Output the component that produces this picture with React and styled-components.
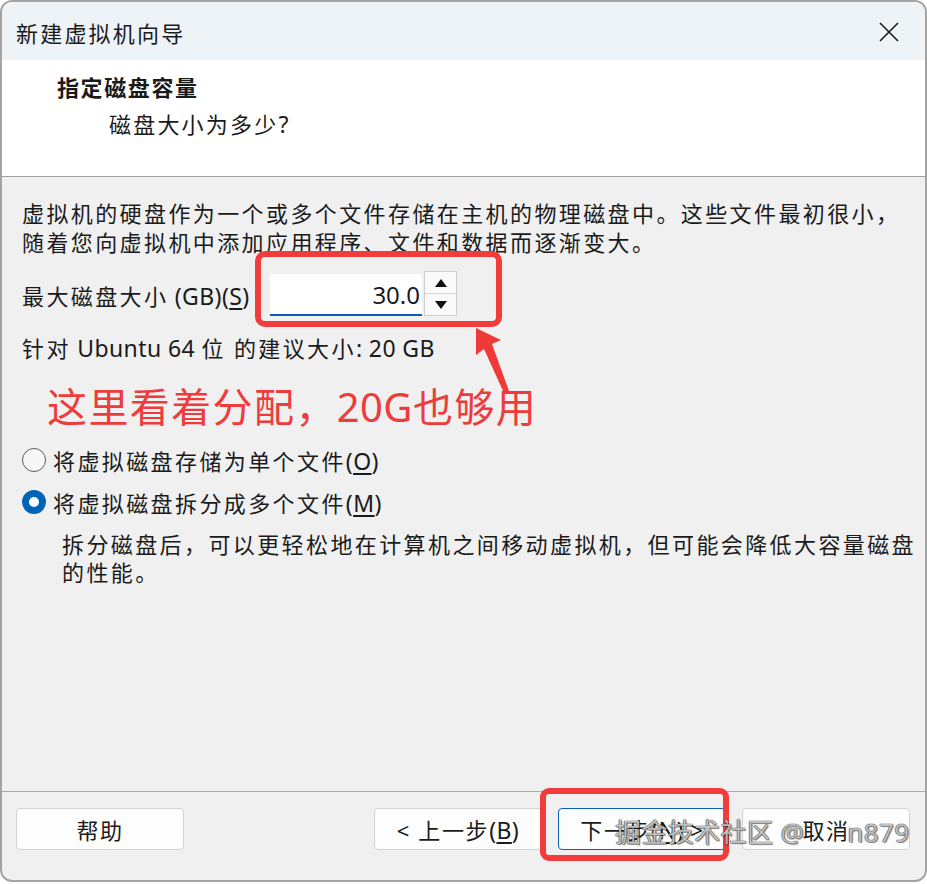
import React from 'react'
import styled, { createGlobalStyle } from 'styled-components'

const Global = createGlobalStyle`
  html, body { margin: 0; padding: 0; background: #ffffff; }
  body {
    font-family: "Noto Sans", "Noto Sans CJK SC", sans-serif;
    color: #1a1a1a;
  }
`

const Window = styled.div`
  width: 923px;
  height: 878px;
  border: 2px solid #a4a4a4;
  border-radius: 12px;
  overflow: hidden;
  display: flex;
  flex-direction: column;
  background: #f0f0f0;
`

const TitleBar = styled.div`
  height: 58px;
  flex: none;
  background: #eef3f8;
  display: flex;
  align-items: center;
  justify-content: space-between;
  padding: 0 16px 0 14px;
`

const Title = styled.div`
  font-size: 22px;
  letter-spacing: 2.2px;
  padding-top: 2px;
`

const CloseBtn = styled.button`
  border: none;
  background: transparent;
  width: 40px;
  height: 40px;
  padding: 0;
  display: flex;
  align-items: center;
  justify-content: center;
  margin-top: 2px;
`

const Header = styled.div`
  height: 117px;
  flex: none;
  background: #ffffff;
  border-bottom: 1px solid #a0a0a0;
  padding: 13px 0 0 55px;
  box-sizing: border-box;
`

const HeadTitle = styled.div`
  font-size: 22px;
  font-weight: 700;
  letter-spacing: 1.6px;
  line-height: 29px;
`

const HeadSub = styled.div`
  font-size: 22px;
  letter-spacing: 2.2px;
  line-height: 29px;
  margin: 8px 0 0 52px;
`

const Body = styled.div`
  position: relative;
  flex: 1;
  padding: 22px 0 0 20px;
  font-size: 22px;
  letter-spacing: 2.4px;
`

const Lat = styled.span`
  font-size: ${p => p.$size || 23}px;
  letter-spacing: 0.4px;
`

const Para = styled.div`
  line-height: 29px;
`

const SizeRow = styled.div`
  display: flex;
  align-items: center;
  margin-top: 17px;
  height: 42px;
`

const Label = styled.span`
  width: 248px;
  flex: none;
  padding-top: 1px;
`

const Under = styled.span`
  text-decoration: underline;
  text-underline-offset: 3px;
`

const NumInput = styled.div`
  width: 152px;
  height: 42px;
  box-sizing: border-box;
  background: #ffffff;
  border-bottom: 2px solid #0a5fb4;
  font-size: 24px;
  letter-spacing: 0;
  display: flex;
  align-items: center;
  justify-content: flex-end;
  padding: 0 2px 0 0;
`

const Spinner = styled.div`
  width: 33px;
  height: 45px;
  margin-top: -3px;
  margin-left: 2px;
  display: flex;
  flex-direction: column;
  border: 1px solid #cfcfcf;
  box-sizing: border-box;
`

const SpinBtn = styled.div`
  flex: 1;
  background: #fafafa;
  display: flex;
  align-items: center;
  justify-content: center;
  & + & { border-top: 1px solid #d4d4d4; }
`

const Hint = styled.div`
  line-height: 29px;
  margin-top: 18px;
`

const Note = styled.div`
  margin: 19px 0 0 25px;
  font-size: 40px;
  line-height: 50px;
  letter-spacing: 1.4px;
  color: #ee3b3b;
`

const RadioRow = styled.label`
  display: flex;
  align-items: center;
  height: 30px;
  margin-top: ${p => p.$gap}px;
  gap: 7px;
`

const Radio = styled.span`
  width: 24px;
  height: 24px;
  box-sizing: border-box;
  border-radius: 50%;
  flex: none;
  display: flex;
  align-items: center;
  justify-content: center;
  border: ${p => (p.$on ? 'none' : '1.5px solid #5a5a5a')};
  background: ${p => (p.$on ? '#0063b8' : '#f7f7f7')};
  &::after {
    content: '';
    width: 10px;
    height: 10px;
    border-radius: 50%;
    background: #ffffff;
    display: ${p => (p.$on ? 'block' : 'none')};
  }
`

const Desc = styled.div`
  margin: 13px 0 0 40px;
  line-height: 28px;
`

const Annot = styled.div`
  position: absolute;
  left: 253px;
  top: 74px;
  width: 247px;
  height: 76px;
  box-sizing: border-box;
  border: 6px solid #f23b3b;
  border-radius: 10px;
`

const Arrow = styled.svg`
  position: absolute;
  left: 460px;
  top: 145px;
`

const Footer = styled.div`
  position: relative;
  height: 72px;
  flex: none;
  border-top: 1px solid #a9a9a9;
  display: flex;
  align-items: flex-start;
  padding: 16px 15px 0 14px;
  gap: 16px;
`

const Btn = styled.button`
  width: 168px;
  height: 42px;
  box-sizing: border-box;
  background: #fdfdfd;
  border: 1px solid ${p => (p.$primary ? '#0a5fb4' : '#d2d2d2')};
  border-radius: 4px;
  font-family: inherit;
  font-size: 22px;
  letter-spacing: 1.6px;
  color: #1a1a1a;
  padding: 0;
`

const Spacer = styled.div`
  flex: 1;
`

const FootMark = styled.div`
  position: absolute;
  left: 538px;
  top: -4px;
  width: 189px;
  height: 73px;
  box-sizing: border-box;
  border: 6px solid #f23b3b;
  border-radius: 9px;
`

const Watermark = styled.div`
  position: absolute;
  left: 613px;
  top: 20px;
  font-size: 26px;
  letter-spacing: 0.4px;
  color: rgba(255, 255, 255, 0.72);
  text-shadow: 0 0 1px #222, 0 0 1px #222, 1px 1px 1px rgba(0,0,0,0.4);
  white-space: pre;
  pointer-events: none;
`

export default function App() {
  return (
    <>
      <Global />
      <Window>
        <TitleBar>
          <Title>新建虚拟机向导</Title>
          <CloseBtn>
            <svg width="22" height="22" viewBox="0 0 22 22">
              <path d="M2 2 L20 20 M20 2 L2 20" stroke="#1a1a1a" strokeWidth="1.6" fill="none" />
            </svg>
          </CloseBtn>
        </TitleBar>
        <Header>
          <HeadTitle>指定磁盘容量</HeadTitle>
          <HeadSub>磁盘大小为多少<Lat>?</Lat></HeadSub>
        </Header>
        <Body>
          <Para>
            虚拟机的硬盘作为一个或多个文件存储在主机的物理磁盘中。这些文件最初很小，
            <br />
            随着您向虚拟机中添加应用程序、文件和数据而逐渐变大。
          </Para>
          <SizeRow>
            <Label>最大磁盘大小<Lat> (GB)(<Under>S</Under>)</Lat></Label>
            <NumInput>30.0</NumInput>
            <Spinner>
              <SpinBtn>
                <svg width="12" height="8" viewBox="0 0 12 8"><path d="M6 0 L12 8 L0 8 Z" fill="#111" /></svg>
              </SpinBtn>
              <SpinBtn>
                <svg width="12" height="8" viewBox="0 0 12 8"><path d="M0 0 L12 0 L6 8 Z" fill="#111" /></svg>
              </SpinBtn>
            </Spinner>
          </SizeRow>
          <Hint>针对<Lat> Ubuntu 64 </Lat>位 的建议大小<Lat>: 20 GB</Lat></Hint>
          <Note>这里看着分配，<Lat $size={40}>20G</Lat>也够用</Note>
          <RadioRow $gap={13}>
            <Radio />
            <span>将虚拟磁盘存储为单个文件<Lat>(<Under>O</Under>)</Lat></span>
          </RadioRow>
          <RadioRow $gap={12}>
            <Radio $on />
            <span>将虚拟磁盘拆分成多个文件<Lat>(<Under>M</Under>)</Lat></span>
          </RadioRow>
          <Desc>
            拆分磁盘后，可以更轻松地在计算机之间移动虚拟机，但可能会降低大容量磁盘
            <br />
            的性能。
          </Desc>
          <Annot />
          <Arrow width="60" height="70" viewBox="460 145 60 70">
            <path
              d="M474 151 L499 163 L490 167 L507 214 L502 216 L482 172 L474 178 Z"
              fill="#f03a3a"
            />
          </Arrow>
        </Body>
        <Footer>
          <Btn>帮助</Btn>
          <Spacer />
          <Btn>&lt; 上一步<Lat>(<Under>B</Under>)</Lat></Btn>
          <Btn $primary>下一步<Lat>(<Under>N</Under>) &gt;</Lat></Btn>
          <Btn>取消</Btn>
          <FootMark />
          <Watermark>掘金技术社区 @      n879</Watermark>
        </Footer>
      </Window>
    </>
  )
}
